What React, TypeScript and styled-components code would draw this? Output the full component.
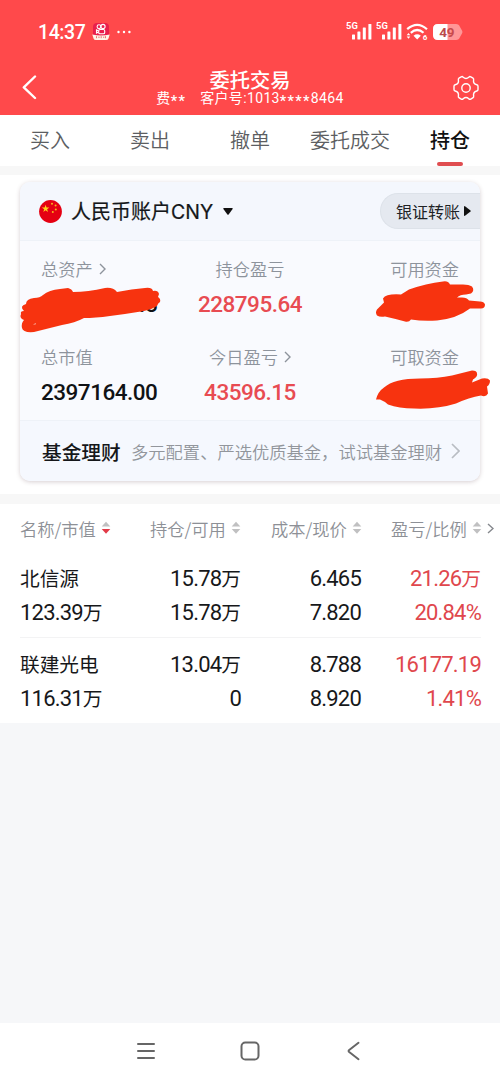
import React from 'react';
import styled, { createGlobalStyle } from 'styled-components';

const Global = createGlobalStyle`
  * { box-sizing: border-box; }
  body {
    margin: 0;
    background: #f6f7f9;
    font-family: 'Noto Sans CJK SC', 'Noto Sans', sans-serif;
    color: #15171a;
  }
`;

const Screen = styled.div`
  width: 500px;
  height: 1083px;
  display: flex;
  flex-direction: column;
  overflow: hidden;
  background: #f6f7f9;
`;

const Header = styled.header`
  height: 115px;
  background: #ff494b;
  color: #fff;
  display: flex;
  flex-direction: column;
  flex-shrink: 0;
`;

const StatusBar = styled.div`
  height: 64px;
  padding: 0 37px 0 38px;
  display: flex;
  align-items: center;
  justify-content: space-between;
`;

const StatusGroup = styled.div<{ $gap: number }>`
  display: flex;
  align-items: center;
  gap: ${(p) => p.$gap}px;
`;

const Clock = styled.span`
  font: 500 19.5px/24px Roboto, sans-serif;
  letter-spacing: -0.4px;
  padding-top: 1px;
`;

const TitleBar = styled.div`
  height: 51px;
  padding: 0 20px;
  display: grid;
  grid-template-columns: 30px 1fr 30px;
  align-items: flex-start;
`;

const TitleBlock = styled.div`
  display: flex;
  flex-direction: column;
  align-items: center;
  padding-top: 4px;
`;

const Title = styled.h1`
  margin: 0;
  font-size: 20.3px;
  line-height: 23px;
  font-weight: 500;
`;

const Account = styled.div`
  display: flex;
  gap: 14px;
  font-size: 14px;
  line-height: 15px;
`;

const AccountText = styled.span`
  font-family: Roboto, 'Noto Sans CJK SC', sans-serif;
  font-weight: 400;
  letter-spacing: 0.35px;
  white-space: nowrap;
`;

const Stars = styled.span`
  display: inline-block;
  height: 15px;
  line-height: 21px;
  vertical-align: top;
  font-size: 14.5px;
  font-weight: 500;
  letter-spacing: 1.3px;
`;

const Tabs = styled.nav`
  height: 51px;
  background: #fff;
  display: grid;
  grid-template-columns: repeat(5, 1fr);
  flex-shrink: 0;
`;

const Tab = styled.div<{ $active?: boolean }>`
  display: flex;
  flex-direction: column;
  align-items: center;
  justify-content: space-between;
  padding-top: 10px;
  font-size: 20px;
  line-height: 30px;
  white-space: nowrap;
  color: ${(p) => (p.$active ? '#111' : '#5c5e62')};
  font-weight: ${(p) => (p.$active ? 500 : 350)};
`;

const TabMark = styled.span`
  width: 26px;
  height: 4px;
  border-radius: 2px;
  background: #e04d50;
`;

const Gap = styled.div<{ $h: number }>`
  height: ${(p) => p.$h}px;
  background: #f7f7f7;
  flex-shrink: 0;
`;

const CardArea = styled.section`
  height: 319px;
  padding: 7px 20px 13px;
  background: #fff;
  flex-shrink: 0;
`;

const Card = styled.div`
  height: 299px;
  position: relative;
  display: flex;
  flex-direction: column;
  background: #f9fafe;
  border-radius: 10px;
  box-shadow: 0 1px 4px rgba(90, 60, 70, 0.25);
`;

const CardHead = styled.div`
  height: 59px;
  flex-shrink: 0;
  padding-left: 19px;
  display: flex;
  align-items: center;
  justify-content: space-between;
  background: #f4f7fd;
  border-bottom: 1px solid #eef2f8;
  border-radius: 10px 10px 0 0;
`;

const Currency = styled.div`
  display: flex;
  align-items: center;
  font-size: 20px;
  line-height: 30px;
  font-weight: 400;
  -webkit-text-stroke: 0.2px;
`;

const CurrencyName = styled.span`
  margin: 0 10px 0 9px;
`;

const CurrencyCode = styled.span`
  font-family: Inter, sans-serif;
  font-size: 19.5px;
`;

const TransferButton = styled.button`
  width: 100px;
  height: 36px;
  padding: 0 9px 1px 15px;
  display: flex;
  align-items: center;
  justify-content: space-between;
  border: 1px solid #dde2e9;
  border-right: 0;
  border-radius: 18px 0 0 18px;
  background: #e5e9f0;
  color: #202225;
  font: 400 16px/24px 'Noto Sans CJK SC', sans-serif;
`;

const Stats = styled.div`
  flex: 1;
  padding: 14px 21px 0;
  display: grid;
  grid-template-columns: 139px 140px 139px;
  grid-template-rows: 88px 76px;
`;

const Stat = styled.div<{ $align: string }>`
  display: flex;
  flex-direction: column;
  align-items: ${(p) => p.$align};
`;

const StatLabel = styled.div`
  height: 27px;
  display: flex;
  align-items: center;
  gap: 6px;
  color: #8d939c;
  font-size: 17.2px;
  font-weight: 350;
`;

const StatValue = styled.div<{ $red?: boolean; $indent?: number }>`
  margin-top: 8px;
  padding-left: ${(p) => p.$indent ?? 0}px;
  font: 500 22.5px/28px Roboto, sans-serif;
  letter-spacing: -0.5px;
  color: ${(p) => (p.$red ? '#e84b52' : '#101215')};
`;

const CardFoot = styled.div`
  height: 61px;
  flex-shrink: 0;
  padding: 0 20px 0 22px;
  display: flex;
  align-items: center;
  background: #f5f8fe;
  border-top: 1px solid #eef2f8;
  border-radius: 0 0 10px 10px;
  white-space: nowrap;
`;

const FundTitle = styled.span`
  font-size: 19.7px;
  font-weight: 500;
  width: 89px;
`;

const FundText = styled.span`
  color: #92969c;
  font-size: 17.3px;
  font-weight: 350;
  flex: 1;
`;

const Redaction = styled.svg`
  position: absolute;
  left: -20px;
  top: -182px;
  width: 500px;
  height: 500px;
  pointer-events: none;
`;

const Holdings = styled.section`
  height: 219px;
  background: #fff;
  flex-shrink: 0;
`;

const HoldHead = styled.div`
  height: 48px;
  display: flex;
  align-items: center;
  padding: 0 6px 0 20px;
`;

const HeadCell = styled.div<{ $w: number }>`
  width: ${(p) => p.$w}px;
  display: flex;
  align-items: center;
  gap: 5px;
  color: #8d9096;
  font-size: 17.3px;
  font-weight: 350;
  white-space: nowrap;
  flex-shrink: 0;
  svg { flex-shrink: 0; }
`;

const HoldRow = styled.div<{ $last?: boolean }>`
  height: ${(p) => (p.$last ? 85 : 86)}px;
  margin: 0 19px 0 20px;
  padding-top: ${(p) => (p.$last ? 9 : 9)}px;
  display: grid;
  grid-template-columns: 110px 111px 120px 120px;
  grid-auto-rows: 33.5px;
  border-bottom: ${(p) => (p.$last ? 0 : 1)}px solid #f3f3f4;
`;

const HoldCell = styled.div<{ $left?: boolean; $red?: boolean }>`
  text-align: ${(p) => (p.$left ? 'left' : 'right')};
  color: ${(p) => (p.$red ? '#e0474d' : '#17181a')};
  white-space: nowrap;
  font-size: 19.7px;
  line-height: 33px;
`;

const Num = styled.span`
  font-family: Roboto, sans-serif;
  font-size: 22px;
  letter-spacing: -0.8px;
  line-height: 1;
`;

const Han = styled.span`
  font-size: 19.7px;
  font-weight: 400;
`;

const Filler = styled.div`
  flex: 1;
`;

const NavBar = styled.footer`
  height: 60px;
  background: #fff;
  display: flex;
  justify-content: center;
  align-items: center;
  gap: 84px;
  padding-bottom: 4px;
`;

const Chevron = ({ w, h, color, sw = 1.4 }: { w: number; h: number; color: string; sw?: number }) => (
  <svg width={w} height={h} viewBox={`0 0 ${w} ${h}`} fill="none" stroke={color} strokeWidth={sw}>
    <path d={`M1 1L${w - 1} ${h / 2}L1 ${h - 1}`} />
  </svg>
);

const Sort = ({ active }: { active?: boolean }) => (
  <svg width="10" height="14" viewBox="0 0 10 14">
    <path d="M5 .8L9.3 5.4H.7z" fill="#c0c0c1" />
    <path d="M.7 8H9.3L5 12.8z" fill={active ? '#e23a48' : '#c0c0c1'} />
  </svg>
);

const AppBadge = () => (
  <svg width="18" height="18" viewBox="0 0 18 18" fill="none">
    <rect x="1" y="0" width="16" height="16" rx="4" fill="#e91f4c" />
    <g stroke="#fff" strokeWidth="1.1">
      <circle cx="7" cy="3.7" r="1.9" />
      <circle cx="11" cy="3.5" r="2.1" />
      <rect x="6.7" y="6.5" width="6" height="4.2" rx="1.3" />
      <path d="M6.5 8L4.5 7v3l2-1" />
    </g>
    <path d="M.3 11.5Q9 13.5 17.7 11.5L16.5 15.5Q16 17 14 17H4Q2 17 1.5 15.5z" fill="#fff4e8" />
    <path d="M4.5 13.2v2M6.2 14.2h1.5M9.2 13.2v2M11 14.2h1.3M13.5 13.2v2" stroke="#e45252" strokeWidth=".8" />
  </svg>
);

const Signal = () => (
  <svg width="28" height="24" viewBox="0 0 28 24">
    <text x="0" y="9.3" fontFamily="Roboto, sans-serif" fontSize="9.4" fontWeight="700" fill="#fff">5G</text>
    <g fill="#fff">
      <rect x="6" y="14.5" width="3" height="5" rx=".6" />
      <rect x="11.4" y="11.5" width="3" height="8" rx=".6" />
      <rect x="16.8" y="7.5" width="3" height="12" rx=".6" />
      <rect x="22.4" y="4" width="3" height="15.5" rx=".6" />
    </g>
  </svg>
);

const Wifi = () => (
  <svg width="23" height="18" viewBox="0 0 23 18" fill="none">
    <g stroke="#fff" strokeWidth="2.2">
      <path d="M1.2 6.2Q11.2-2.5 21 6.2" />
      <path d="M4.8 9.8Q11.2 4.2 17.5 9.8" />
    </g>
    <path d="M7.5 12.7Q11.2 9.8 14.8 12.7L11.2 16.5z" fill="#fff" />
    <path d="M.7 12.2L2.5 10l1.8 2.2zM.7 13.6L2.5 15.8l1.8-2.2z" fill="#fff" />
    <text x="16.8" y="17" fontFamily="Roboto, sans-serif" fontSize="8" fontWeight="700" fill="#fff">6</text>
  </svg>
);

const Battery = () => (
  <svg width="30" height="16" viewBox="0 0 30 16">
    <path d="M5 0H23Q26 0 27 3L29 6.5Q30 8 29 9.5L27 13Q26 16 23 16H5Q0 16 0 11V5Q0 0 5 0z" fill="#ff9697" />
    <path d="M5 0H14.5V16H5Q0 16 0 11V5Q0 0 5 0z" fill="#fff" />
    <text x="6.3" y="12.8" fontFamily="Roboto, sans-serif" fontSize="13.5" fontWeight="700" fill="#b9494c">4</text>
    <text x="13.8" y="12.8" fontFamily="Roboto, sans-serif" fontSize="13.5" fontWeight="700" fill="#c9494c">9</text>
  </svg>
);

const BackArrow = styled.svg`
  margin: 11px 0 0 2px;
`;

const GearIcon = styled.svg`
  margin: 11px 0 0 2.5px;
`;

const Flag = () => (
  <svg width="23" height="23" viewBox="0 0 23 23">
    <circle cx="11.5" cy="11.5" r="11.4" fill="#e50012" />
    <path d="M6.6 4.8l.9 2.7h2.9L8.1 9.2l.9 2.8-2.4-1.7-2.3 1.7.9-2.8-2.4-1.7h2.9z" fill="#ffd21c" />
    <g fill="#f7b51c">
      <circle cx="13" cy="3.8" r="1" />
      <circle cx="16.6" cy="5.5" r="1" />
      <circle cx="16.8" cy="9.5" r="1" />
      <circle cx="13.8" cy="12" r="1" />
    </g>
  </svg>
);

const rows = [
  { name: '北信源', value: '123.39万', held: '15.78万', free: '15.78万', cost: '6.465', price: '7.820', gain: '21.26万', ratio: '20.84%' },
  { name: '联建光电', value: '116.31万', held: '13.04万', free: '0', cost: '8.788', price: '8.920', gain: '16177.19', ratio: '1.41%' },
];

const Amount = ({ text }: { text: string }) => {
  const wan = text.endsWith('万');
  return (
    <>
      <Num>{wan ? text.slice(0, -1) : text}</Num>
      {wan && <Han>万</Han>}
    </>
  );
};

export default function App() {
  return (
    <Screen>
      <Global />
      <Header>
        <StatusBar>
          <StatusGroup $gap={7}>
            <Clock>14:37</Clock>
            <AppBadge />
            <svg width="14" height="4" viewBox="0 0 14 4" fill="#fff">
              <circle cx="1.5" cy="2" r="1.2" />
              <circle cx="7" cy="2" r="1.2" />
              <circle cx="12.4" cy="2" r="1.2" />
            </svg>
          </StatusGroup>
          <StatusGroup $gap={2}>
            <Signal />
            <Signal />
            <Wifi />
            <span />
            <Battery />
          </StatusGroup>
        </StatusBar>
        <TitleBar>
          <BackArrow width="16" height="25" viewBox="0 0 16 25" fill="none" stroke="#fff" strokeWidth="2.4" strokeLinecap="round" strokeLinejoin="round">
            <path d="M13 1.5L1.8 12.3L13 23" />
          </BackArrow>
          <TitleBlock>
            <Title>委托交易</Title>
            <Account>
              <AccountText>费<Stars>**</Stars></AccountText>
              <AccountText>客户号:1013<Stars>****</Stars>8464</AccountText>
            </Account>
          </TitleBlock>
          <GearIcon width="26" height="26" viewBox="0 0 26 26" fill="none" stroke="#fff" strokeWidth="1.4" strokeLinejoin="round">
            <path d="M8.2 1.8Q9.4 1.2 10.2 2.2Q13 4.6 15.8 2.2Q16.6 1.2 17.8 1.8L20.1 3.2Q20.9 3.8 20.6 4.9Q19.9 8.9 23.8 9.8Q25 10.1 25 11.3V14.5Q25 15.7 23.8 16Q19.9 17 20.6 21Q20.9 22.1 20.1 22.7L17.8 24.1Q16.6 24.7 15.8 23.7Q13 21.3 10.2 23.7Q9.4 24.7 8.2 24.1L5.9 22.7Q5.1 22.1 5.4 21Q6.1 17 2.2 16Q1 15.7 1 14.5V11.3Q1 10.1 2.2 9.8Q6.1 8.9 5.4 4.9Q5.1 3.8 5.9 3.2z" />
            <circle cx="13" cy="13" r="4.2" />
          </GearIcon>
        </TitleBar>
      </Header>

      <Tabs>
        <Tab>买入</Tab>
        <Tab>卖出</Tab>
        <Tab>撤单</Tab>
        <Tab>委托成交</Tab>
        <Tab $active>
          持仓
          <TabMark />
        </Tab>
      </Tabs>
      <Gap $h={9} />

      <CardArea>
        <Card>
          <CardHead>
            <Currency>
              <Flag />
              <CurrencyName>人民币账户<CurrencyCode>CNY</CurrencyCode></CurrencyName>
              <svg width="10" height="7" viewBox="0 0 10 7">
                <path d="M.8 0H9.2Q10 .2 9.6 1L5.6 6.4Q5 7 4.4 6.4L.4 1Q0 .2 .8 0z" fill="#111" />
              </svg>
            </Currency>
            <TransferButton>
              银证转账
              <svg width="7" height="10" viewBox="0 0 7 10">
                <path d="M0 .7Q.2-.2 1 .3L6.5 4.4Q7 5 6.5 5.6L1 9.7Q.2 10.2 0 9.3z" fill="#111" />
              </svg>
            </TransferButton>
          </CardHead>
          <Stats>
            <Stat $align="flex-start">
              <StatLabel>总资产<Chevron w={7} h={12} color="#8d939c" /></StatLabel>
              <StatValue $indent={92}>43</StatValue>
            </Stat>
            <Stat $align="center">
              <StatLabel>持仓盈亏</StatLabel>
              <StatValue $red>228795.64</StatValue>
            </Stat>
            <Stat $align="flex-end">
              <StatLabel>可用资金</StatLabel>
            </Stat>
            <Stat $align="flex-start">
              <StatLabel>总市值</StatLabel>
              <StatValue>2397164.00</StatValue>
            </Stat>
            <Stat $align="center">
              <StatLabel>今日盈亏<Chevron w={7} h={12} color="#8d939c" /></StatLabel>
              <StatValue $red>43596.15</StatValue>
            </Stat>
            <Stat $align="flex-end">
              <StatLabel>可取资金</StatLabel>
            </Stat>
          </Stats>
          <CardFoot>
            <FundTitle>基金理财</FundTitle>
            <FundText>多元配置、严选优质基金，试试基金理财</FundText>
            <Chevron w={9} h={16} color="#b9bdc3" sw={1.7} />
          </CardFoot>
          <Redaction viewBox="0 0 500 500" fill="#f7330f">
            <path d="M26 304Q26 299 34 298Q40 298 43 295Q49 290 60 289L68 288Q72 289 73 292Q88 292 105 288Q113 287 117 292Q132 289 145 288Q152 287 153 291Q158 290 159 294L158 297Q161 299 160 302Q158 303 157 306Q151 310 144 311Q126 314 110 316Q95 318 84 318Q75 323 62 325L34 332Q23 333 22 328Q21 323 24 320Q19 318 21 314Q20 311 24 311Q19 306 26 304z" />
            <path d="M33 324.4l2.6-1.1 .3 1z" fill="#fbe9e5" />
            <path d="M377 309Q375 312 377 315Q380 317 385 316Q394 318 405 321Q409 322 411 319Q423 321 437 320Q457 318 470 308L481 308Q485 308 485 304Q484 301 480 301L469 300Q467 297 462 297L457 297Q460 294 466 294L471 293Q475 290 472 286Q469 284 463 284L450 284Q448 280 443 281Q426 283 409 289L401 294Q386 293 383 298L384 302Q380 306 377 309z" transform="translate(0 .5)" />
            <path d="M376 399Q378 391 384 387Q394 378 420 378Q438 378 452 375L472 370Q477 370 477 373Q478 376 473 379L472 382L482 378Q488 377 490 380Q490 384 487 386L488 393Q486 397 481 395Q469 397 456 403Q437 409 414 408Q399 408 388 404Q385 401 380 399z" transform="translate(0 .5)" />
          </Redaction>
        </Card>
      </CardArea>
      <Gap $h={10} />

      <Holdings>
        <HoldHead>
          <HeadCell $w={130}>名称/市值<Sort active /></HeadCell>
          <HeadCell $w={121}>持仓/可用<Sort /></HeadCell>
          <HeadCell $w={120}>成本/现价<Sort /></HeadCell>
          <HeadCell $w={103}>盈亏/比例<Sort /><Chevron w={7} h={11} color="#85888d" /></HeadCell>
        </HoldHead>
        {rows.map((r, i) => (
          <HoldRow key={r.name} $last={i === rows.length - 1}>
            <HoldCell $left><Han>{r.name}</Han></HoldCell>
            <HoldCell><Amount text={r.held} /></HoldCell>
            <HoldCell><Amount text={r.cost} /></HoldCell>
            <HoldCell $red><Amount text={r.gain} /></HoldCell>
            <HoldCell $left><Amount text={r.value} /></HoldCell>
            <HoldCell><Amount text={r.free} /></HoldCell>
            <HoldCell><Amount text={r.price} /></HoldCell>
            <HoldCell $red><Amount text={r.ratio} /></HoldCell>
          </HoldRow>
        ))}
      </Holdings>

      <Filler />
      <NavBar>
        <svg width="20" height="20" viewBox="0 0 20 20" stroke="#666" strokeWidth="2" strokeLinecap="round">
          <path d="M2 3H18M2 10H18M2 17H18" />
        </svg>
        <svg width="20" height="20" viewBox="0 0 20 20" fill="none" stroke="#666" strokeWidth="2">
          <rect x="1.5" y="1.5" width="17" height="17" rx="3.8" />
        </svg>
        <svg width="20" height="20" viewBox="0 0 20 20" fill="none" stroke="#666" strokeWidth="2" strokeLinecap="round" strokeLinejoin="round">
          <path d="M14.5 1.8L5.2 9Q4 10 5.2 11L14.5 18.2" />
        </svg>
      </NavBar>
    </Screen>
  );
}
